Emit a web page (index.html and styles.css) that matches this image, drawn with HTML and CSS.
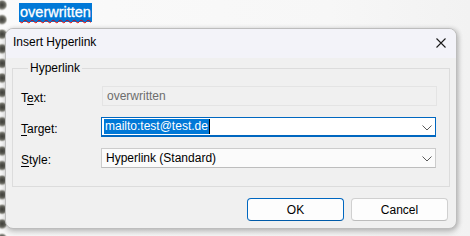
FILE: index.html
```html
<!DOCTYPE html>
<html>
<head>
<meta charset="utf-8">
<link rel="stylesheet" href="styles.css">
</head>
<body>
<div class="page">
  <div class="doc-line"><span class="doc-word">overwritten</span></div>
  <div class="dialog">
    <div class="titlebar">
      <span class="title">Insert Hyperlink</span>
      <svg class="close" width="10" height="10" viewBox="0 0 10 10"><path d="M0.5 0.5 L9.5 9.5 M9.5 0.5 L0.5 9.5" stroke="#1b1b1b" stroke-width="1.1" fill="none"/></svg>
    </div>
    <div class="body">
      <fieldset class="group">
        <legend class="legend">Hyperlink</legend>
        <div class="row">
          <label class="label">T<u>e</u>xt:</label>
          <div class="field disabled">overwritten</div>
        </div>
        <div class="row">
          <label class="label"><u>T</u>arget:</label>
          <div class="field combo focused"><span class="sel">mailto:test@test.de</span><span class="caret"></span>
            <svg class="chev" width="10" height="6" viewBox="0 0 10 6"><path d="M0.5 0.5 L5 5 L9.5 0.5" stroke="#5a5a5a" stroke-width="1" fill="none"/></svg>
          </div>
        </div>
        <div class="row">
          <label class="label"><u>S</u>tyle:</label>
          <div class="field combo plain"><span class="val">Hyperlink (Standard)</span>
            <svg class="chev" width="10" height="6" viewBox="0 0 10 6"><path d="M0.5 0.5 L5 5 L9.5 0.5" stroke="#5a5a5a" stroke-width="1" fill="none"/></svg>
          </div>
        </div>
      </fieldset>
      <div class="buttons">
        <button class="btn primary">OK</button>
        <button class="btn">Cancel</button>
      </div>
    </div>
  </div>
</div>
</body>
</html>
```
FILE: styles.css
```css
html, body {
  margin: 0;
  padding: 0;
}
body {
  width: 470px;
  height: 236px;
  overflow: hidden;
  background-color: #f6f6f6;
  font-family: "Segoe UI", "Liberation Sans", Arial, sans-serif;
  font-size: 12px;
  color: #000;
}
.page {
  width: 470px;
  height: 236px;
  background:
    radial-gradient(circle at 2px 7px, #3f3f3a 0, #5e5e57 2.6px, #7f7f77 3.8px, rgba(170,170,162,0.5) 4.8px, rgba(255,255,255,0) 5.6px) 0 -2px / 9px 14.6px repeat-y,
    linear-gradient(to right, #fafafa 0, #f7f7f7 70%, #f2f2f2 100%);
  display: flex;
  flex-direction: column;
}
.doc-line {
  height: 28px;
  padding-left: 19px;
  padding-top: 3px;
  box-sizing: border-box;
}
.doc-word {
  display: inline-block;
  background: #0078d7;
  color: #fff;
  font-size: 14.5px;
  line-height: 19px;
  padding: 0 1px;
  -webkit-text-stroke: 0.3px #fff;
  text-decoration: underline wavy #e00000;
  text-decoration-thickness: 1px;
  text-underline-offset: 2px;
}
.dialog {
  margin-left: 5px;
  width: 452px;
  height: 201px;
  box-sizing: border-box;
  border: 1px solid #bdbdbd;
  border-radius: 8px;
  overflow: hidden;
  background: #f0f0f0;
  box-shadow: 0 3px 6px rgba(0,0,0,0.22), 2px 0 4px rgba(0,0,0,0.12);
  display: flex;
  flex-direction: column;
}
.titlebar {
  height: 29px;
  box-sizing: border-box;
  background: #f3f3f9;
  display: flex;
  align-items: center;
  justify-content: space-between;
  padding: 0 10px 3px 7px;
  flex-shrink: 0;
}
.title {
  font-size: 12px;
  color: #000;
}
.close {
  display: block;
  margin-top: 1px;
}
.body {
  flex: 1;
  padding: 4px 6px 0 6px;
  display: flex;
  flex-direction: column;
}
.group {
  margin: 0;
  border: 1px solid #dcdcdc;
  padding: 12px 13px 8px 8px;
  height: 125px;
  box-sizing: border-box;
  display: flex;
  flex-direction: column;
  gap: 11px;
}
.legend {
  padding: 0 2px;
  margin-left: 7px;
  font-size: 12px;
  line-height: 12px;
}
.row {
  display: flex;
  align-items: center;
  height: 20px;
}
.label {
  width: 80px;
  flex-shrink: 0;
  margin-top: 3px;
}
.label u {
  text-underline-offset: 2px;
}
.field {
  flex: 1;
  height: 20px;
  box-sizing: border-box;
  display: flex;
  align-items: center;
  position: relative;
}
.disabled {
  border: 1px solid #e4e4e4;
  color: #6d6d6d;
  padding-left: 4px;
  margin-left: 1px;
  margin-right: -1px;
}
.combo {
  background: #fff;
  padding-left: 2px;
}
.focused {
  border: 1px solid #0067c0;
  border-bottom-width: 2px;
}
.plain {
  border: 1px solid #cccccc;
  border-bottom-color: #bdbdbd;
  background: #fbfbfb;
  padding-left: 4px;
}
.sel {
  background: #0078d7;
  color: #fff;
  line-height: 15px;
  padding: 0 1px;
}
.caret {
  width: 1px;
  height: 15px;
  background: #000;
}
.chev {
  position: absolute;
  right: 3px;
  top: 7px;
}
.buttons {
  display: flex;
  justify-content: flex-end;
  gap: 7px;
  padding-top: 11px;
  padding-right: 2px;
}
.btn {
  width: 97px;
  height: 23px;
  box-sizing: border-box;
  border: 1px solid #d0d0d0;
  border-bottom-color: #bcbcbc;
  border-radius: 4px;
  background: #fdfdfd;
  font-family: inherit;
  font-size: 12px;
  color: #000;
  padding: 0;
}
.primary {
  border: 1px solid #0067c0;
  border-bottom-color: #005aa8;
}
```
